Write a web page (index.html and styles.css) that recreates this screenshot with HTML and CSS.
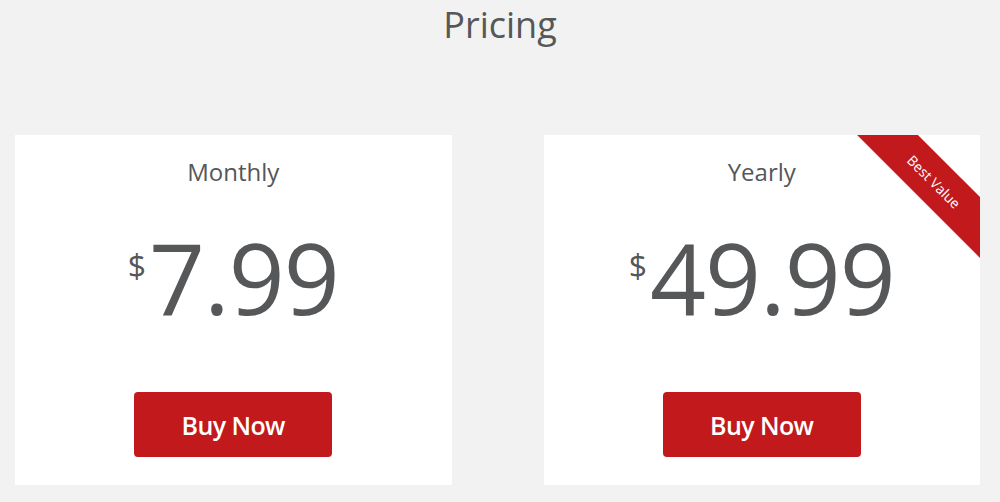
FILE: index.html
```html
<!DOCTYPE html>
<html lang="en">
<head>
<meta charset="utf-8">
<title>Pricing</title>
<link rel="stylesheet" href="styles.css">
</head>
<body>
<main class="page">
  <h1 class="title">Pricing</h1>
  <section class="plans">
    <div class="card">
      <h2 class="plan-name">Monthly</h2>
      <div class="price"><span class="currency">$</span><span class="amount">7.99</span></div>
      <a class="buy" href="#">Buy Now</a>
    </div>
    <div class="card">
      <div class="ribbon">Best Value</div>
      <h2 class="plan-name">Yearly</h2>
      <div class="price"><span class="currency">$</span><span class="amount">49.99</span></div>
      <a class="buy" href="#">Buy Now</a>
    </div>
  </section>
</main>
</body>
</html>
```

FILE: styles.css
```css
html, body {
  margin: 0;
  padding: 0;
  background: #f2f2f2;
}
body {
  font-family: "Open Sans", "Liberation Sans", sans-serif;
  color: #555759;
  width: 1000px;
  height: 502px;
  overflow: hidden;
}
.page {
  display: flex;
  flex-direction: column;
}
.title {
  margin: 0;
  font-size: 36px;
  font-weight: 400;
  line-height: 50px;
  text-align: center;
  color: #555759;
}
.plans {
  display: flex;
  gap: 92px;
  margin: 85px 20px 0 15px;
}
.card {
  flex: 1;
  position: relative;
  overflow: hidden;
  background: #fff;
  height: 350px;
  box-sizing: border-box;
  padding-top: 20px;
  display: flex;
  flex-direction: column;
  align-items: center;
}
.plan-name {
  margin: 0;
  font-size: 24px;
  font-weight: 400;
  line-height: 34px;
}
.price {
  display: flex;
  align-items: flex-start;
  justify-content: center;
  margin-top: 39px;
}
.currency {
  font-size: 32px;
  line-height: 32px;
  margin-top: 22px;
  margin-right: 3px;
}
.amount {
  font-size: 98px;
  font-weight: 400;
  line-height: 98px;
  letter-spacing: -1px;
}
.buy {
  margin-top: 66px;
  width: 198px;
  height: 65px;
  border-radius: 4px;
  background: #c1191c;
  color: #fff;
  text-decoration: none;
  font-size: 25px;
  font-weight: 600;
  letter-spacing: -0.6px;
  display: flex;
  align-items: center;
  justify-content: center;
}
.ribbon {
  position: absolute;
  top: 25px;
  right: -54px;
  width: 200px;
  height: 43px;
  background: #c1191c;
  color: #fff;
  font-size: 14px;
  line-height: 43px;
  text-align: center;
  transform: rotate(45deg);
}
```
